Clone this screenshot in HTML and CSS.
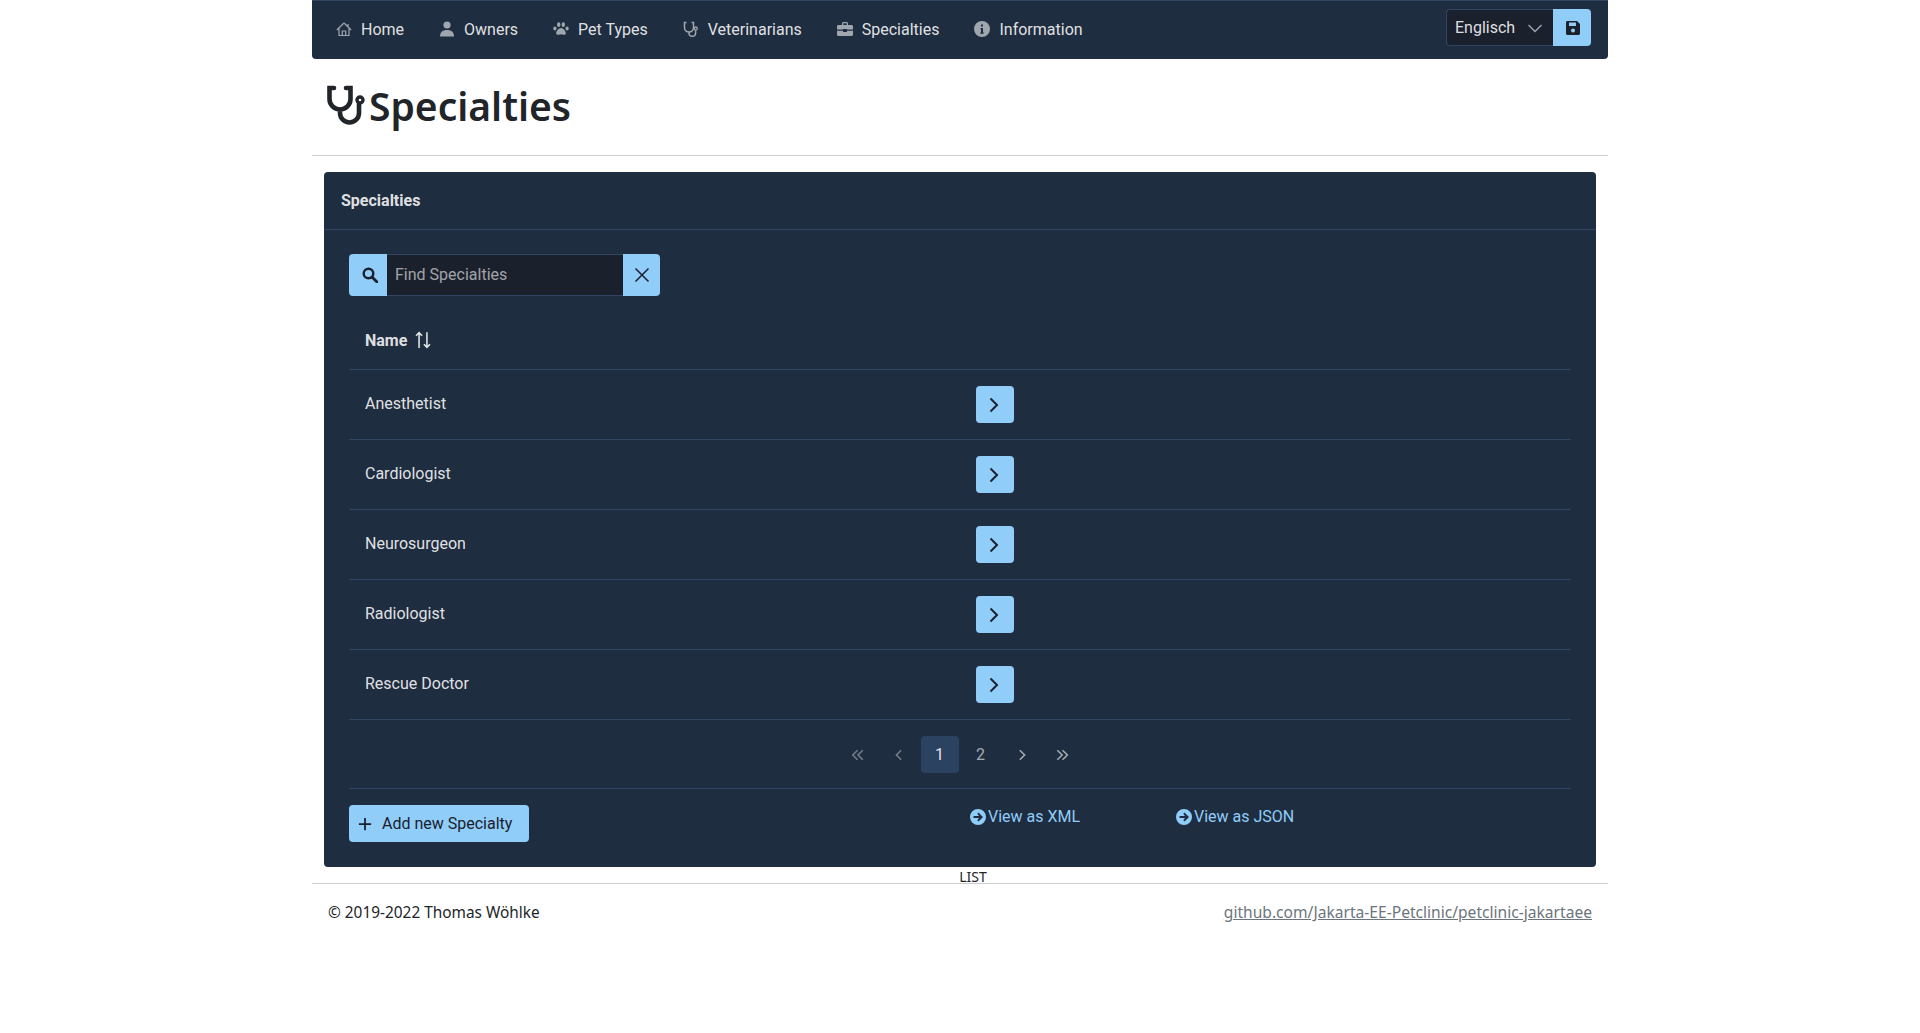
FILE: index.html
```html
<!DOCTYPE html>
<html lang="en">

<head>
    <meta charset="UTF-8">
    <meta name="viewport" content="width=device-width, initial-scale=1.0">
    <title>Specialties</title>
    <link rel="stylesheet" href="styles.css">
</head>

<body>
    <div class="container">
        <nav class="navbar">
            <ul class="nav-list">
                <li class="nav-item">
                    <svg class="nav-icon" viewBox="0 0 16 16"><path d="M8 2 .8 9M8 2l7.200 7M3 7v7.500h10V7M6.300 14.500V10h3.400v4.500M12 3v2.500" fill="none" stroke="currentColor" stroke-width="1.200"/></svg>
                    Home
                </li>
                <li class="nav-item">
                    <svg class="nav-icon" viewBox="0 0 16 16"><circle cx="8" cy="4" r="3.600" fill="currentColor"/><path d="M1 15.500c0-4.500 2.800-6.500 7-6.500s7 2 7 6.500z" fill="currentColor"/></svg>
                    Owners
                </li>
                <li class="nav-item">
                    <svg class="nav-icon" viewBox="0 0 16 16"><ellipse cx="5.700" cy="3.700" rx="1.700" ry="2.400" fill="currentColor"/><ellipse cx="10.300" cy="3.700" rx="1.700" ry="2.400" fill="currentColor"/><ellipse cx="1.900" cy="7.500" rx="1.600" ry="2.100" fill="currentColor"/><ellipse cx="14.100" cy="7.500" rx="1.600" ry="2.100" fill="currentColor"/><path d="M8 7c2 0 4.800 3 4.800 5.200 0 1.500-1.500 1.900-2.500 1.500-.9-.3-1.600-.5-2.300-.5s-1.400.2-2.300.5c-1 .4-2.500 0-2.500-1.500C3.200 10 6 7 8 7z" fill="currentColor"/></svg>
                    Pet Types
                </li>
                <li class="nav-item">
                    <svg class="nav-icon" viewBox="0 0 16 16"><path d="M3.500 1.500H1.500v5a4.500 4.500 0 0 0 9 0v-5h-2M6 11v1a3.300 3.300 0 0 0 6.600 0V9.500" fill="none" stroke="currentColor" stroke-width="1.500"/><circle cx="12.800" cy="7.500" r="1.500" fill="none" stroke="currentColor" stroke-width="1.300"/></svg>
                    Veterinarians
                </li>
                <li class="nav-item">
                    <svg class="nav-icon" viewBox="0 0 16 16"><path d="M5 4V2.500C5 1.700 5.700 1 6.500 1h3c.8 0 1.500.7 1.500 1.500V4h3.500c.8 0 1.500.7 1.500 1.500V8.500H10V8H6v.5H0V5.500C0 4.700.7 4 1.500 4zM6.300 4h3.400V2.300H6.300zM0 9.700h6V11h4V9.700h6v3.800c0 .8-.7 1.500-1.500 1.500h-13C.7 15 0 14.300 0 13.500z" fill="currentColor"/></svg>
                    Specialties
                </li>
                <li class="nav-item">
                    <svg class="nav-icon" viewBox="0 0 16 16"><path fill-rule="evenodd" d="M8 0a8 8 0 1 1 0 16A8 8 0 0 1 8 0zM7 3.500v2h2v-2zM6.500 7v1.200H7v3.300h-.7v1.200h3.400v-1.200H9V7z" fill="currentColor"/></svg>
                    Information
                </li>
            </ul>
            <div class="lang-form">
                <div class="lang-select">
                    Englisch
                    <svg class="lang-caret" viewBox="0 0 16 16"><path d="M1.500 5 8 11.500 14.500 5" fill="none" stroke="currentColor" stroke-width="1.400"/></svg>
                </div>
                <button class="btn btn-save">
                    <svg class="icon-sm" viewBox="0 0 16 16"><path fill-rule="evenodd" d="M2 1h10l3 3v9.500c0 .8-.7 1.500-1.500 1.500h-11C1.700 15 1 14.300 1 13.500v-11C1 1.700 1.700 1 2 1zM4 2.500V6h7V2.500zM8 8.500a2 2 0 1 0 0 4 2 2 0 0 0 0-4z" fill="currentColor"/></svg>
                </button>
            </div>
        </nav>

        <header class="page-title">
            <svg class="title-icon" viewBox="0 0 43 42"><path d="M8 3H3.500v11a10.500 10.500 0 0 0 21 0V3H20M14 25v3a9.500 9.500 0 0 0 19 0v-9" fill="none" stroke="currentColor" stroke-width="4.600" stroke-linecap="round"/><circle cx="34" cy="15" r="3" fill="none" stroke="currentColor" stroke-width="3.400"/></svg>
            <h1>Specialties</h1>
        </header>

        <hr class="rule">

        <section class="card">
            <div class="card-header">Specialties</div>
            <div class="card-body">
                <div class="search-group">
                    <span class="search-addon">
                        <svg class="icon-sm" viewBox="0 0 16 16"><circle cx="6.500" cy="6.500" r="4.800" fill="none" stroke="currentColor" stroke-width="2.400"/><path d="M10 10l5 5" stroke="currentColor" stroke-width="2.800" stroke-linecap="round"/></svg>
                    </span>
                    <div class="search-input">Find Specialties</div>
                    <button class="btn search-clear">
                        <svg class="icon-sm" viewBox="0 0 16 16"><path d="M1.500 1.500l13 13M14.500 1.500l-13 13" stroke="currentColor" stroke-width="1.500"/></svg>
                    </button>
                </div>

                <div class="row row-head">
                    <div class="col-name">
                        Name
                        <svg class="sort-icon" viewBox="0 0 16 16"><path d="M4.500 15V1.500M1.800 4.200 4.500 1.500l2.700 2.700M11.500 1v13.500M8.800 11.800l2.700 2.700 2.700-2.700" fill="none" stroke="currentColor" stroke-width="1.400"/></svg>
                    </div>
                </div>
                <div class="row">
                    <div class="col-name">Anesthetist</div>
                    <button class="btn btn-go"><svg class="icon-sm" viewBox="0 0 16 16"><path d="M3.500 1.500 10 8l-6.500 6.500" fill="none" stroke="currentColor" stroke-width="2"/></svg></button>
                </div>
                <div class="row">
                    <div class="col-name">Cardiologist</div>
                    <button class="btn btn-go"><svg class="icon-sm" viewBox="0 0 16 16"><path d="M3.500 1.500 10 8l-6.500 6.500" fill="none" stroke="currentColor" stroke-width="2"/></svg></button>
                </div>
                <div class="row">
                    <div class="col-name">Neurosurgeon</div>
                    <button class="btn btn-go"><svg class="icon-sm" viewBox="0 0 16 16"><path d="M3.500 1.500 10 8l-6.500 6.500" fill="none" stroke="currentColor" stroke-width="2"/></svg></button>
                </div>
                <div class="row">
                    <div class="col-name">Radiologist</div>
                    <button class="btn btn-go"><svg class="icon-sm" viewBox="0 0 16 16"><path d="M3.500 1.500 10 8l-6.500 6.500" fill="none" stroke="currentColor" stroke-width="2"/></svg></button>
                </div>
                <div class="row">
                    <div class="col-name">Rescue Doctor</div>
                    <button class="btn btn-go"><svg class="icon-sm" viewBox="0 0 16 16"><path d="M3.500 1.500 10 8l-6.500 6.500" fill="none" stroke="currentColor" stroke-width="2"/></svg></button>
                </div>

                <div class="pager">
                    <span class="page-link muted"><svg class="page-icon" viewBox="0 0 16 16"><path d="M7.500 2.500 2 8l5.500 5.500M13.500 2.500 8 8l5.500 5.500" fill="none" stroke="currentColor" stroke-width="1.800"/></svg></span>
                    <span class="page-link muted"><svg class="page-icon" viewBox="0 0 16 16"><path d="M10.500 2.500 5 8l5.500 5.500" fill="none" stroke="currentColor" stroke-width="1.800"/></svg></span>
                    <span class="page-link active">1</span>
                    <span class="page-link">2</span>
                    <span class="page-link"><svg class="page-icon" viewBox="0 0 16 16"><path d="M5.500 2.500 11 8l-5.500 5.500" fill="none" stroke="currentColor" stroke-width="1.800"/></svg></span>
                    <span class="page-link"><svg class="page-icon" viewBox="0 0 16 16"><path d="M1.500 2.500 7 8l-5.500 5.500M7.500 2.500 13 8l-5.500 5.500" fill="none" stroke="currentColor" stroke-width="1.800"/></svg></span>
                </div>

                <div class="actions">
                    <button class="btn btn-add">
                        <svg class="icon-plus" viewBox="0 0 16 16"><path d="M8 1v14M1 8h14" stroke="currentColor" stroke-width="2"/></svg>
                        Add new Specialty
                    </button>
                    <a class="view-link view-xml" href="#">
                        <svg class="view-icon" viewBox="0 0 16 16"><path fill-rule="evenodd" d="M8 0a8 8 0 1 1 0 16A8 8 0 0 1 8 0zM8.500 3.500 7.300 4.700 9 6.900H3.500v2.200H9l-1.700 2.200 1.200 1.200L13 8z" fill="currentColor"/></svg>View as XML
                    </a>
                    <a class="view-link view-json" href="#">
                        <svg class="view-icon" viewBox="0 0 16 16"><path fill-rule="evenodd" d="M8 0a8 8 0 1 1 0 16A8 8 0 0 1 8 0zM8.500 3.500 7.300 4.700 9 6.900H3.500v2.200H9l-1.700 2.200 1.200 1.200L13 8z" fill="currentColor"/></svg>View as JSON
                    </a>
                </div>
            </div>
        </section>

        <div class="view-name">LIST</div>
        <hr class="rule">

        <footer class="footer">
            <span class="copyright">© 2019-2022 Thomas Wöhlke</span>
            <a href="#">github.com/Jakarta-EE-Petclinic/petclinic-jakartaee</a>
        </footer>
    </div>
</body>

</html>
```

FILE: styles.css
```css
body {
    font-family: Roboto, sans-serif;
    font-size: 16px;
    margin: 0;
    background-color: #ffffff;
    color: #212529;
}

.container {
    width: 1296px;
    margin: 0 auto;
}

.btn {
    display: flex;
    align-items: center;
    justify-content: center;
    border: none;
    padding: 0;
    background-color: #90cdf9;
    color: #1a202c;
    font-family: Roboto, sans-serif;
    border-radius: 4px;
}

.icon-sm {
    width: 16px;
    height: 16px;
}

.navbar {
    display: flex;
    align-items: center;
    justify-content: space-between;
    height: 59px;
    padding: 0 17px 2px 24px;
    box-sizing: border-box;
    background-color: #1f2d40;
    border-top: 1px solid #304562;
    border-radius: 0 0 4px 4px;
}

.nav-list {
    display: flex;
    gap: 35px;
    margin: 0;
    padding: 0;
    list-style: none;
}

.nav-item {
    display: flex;
    align-items: center;
    gap: 9px;
    color: rgba(255, 255, 255, 0.87);
}

.nav-icon {
    width: 16px;
    height: 16px;
    color: #a0a6ae;
}

.lang-form {
    display: flex;
    height: 37px;
    margin-top: -3px;
}

.lang-select {
    display: flex;
    align-items: center;
    justify-content: space-between;
    width: 107px;
    padding: 0 10px 0 8px;
    box-sizing: border-box;
    background-color: #1a202c;
    border: 1px solid #304562;
    border-right: none;
    border-radius: 4px 0 0 4px;
    color: rgba(255, 255, 255, 0.87);
}

.lang-caret {
    width: 16px;
    height: 16px;
    color: #a0a6ae;
}

.btn-save {
    width: 38px;
    padding-left: 2px;
    border-radius: 0 4px 4px 0;
}

.page-title {
    display: flex;
    align-items: flex-start;
    height: 96px;
    padding: 26px 0 0 14px;
    box-sizing: border-box;
}

.title-icon {
    width: 43px;
    height: 42px;
    flex-shrink: 0;
}

.page-title h1 {
    margin: -3px 0 0;
    font-family: "Noto Sans", sans-serif;
    font-size: 39px;
    font-weight: 600;
    line-height: 48px;
}

.rule {
    margin: 0;
    border: none;
    border-top: 1px solid #cccccc;
}

.card {
    margin: 16px 12px 0;
    background-color: #1f2d40;
    border-radius: 4px;
    color: rgba(255, 255, 255, 0.87);
}

.card-header {
    height: 57px;
    padding-left: 17px;
    line-height: 57px;
    font-weight: 700;
    border-bottom: 1px solid #304562;
}

.card-body {
    padding: 24px 25px 25px;
}

.search-group {
    display: flex;
    width: 311px;
    height: 42px;
    margin-bottom: 6px;
}

.search-addon {
    display: flex;
    align-items: center;
    justify-content: center;
    width: 38px;
    padding-left: 3px;
    box-sizing: border-box;
    background-color: #90cdf9;
    color: #1a202c;
    border-radius: 4px 0 0 4px;
}

.search-input {
    flex: 1;
    padding-left: 8px;
    line-height: 40px;
    background-color: #1a202c;
    border-top: 1px solid #304562;
    border-bottom: 1px solid #304562;
    color: rgba(255, 255, 255, 0.6);
}

.search-clear {
    width: 37px;
    border-radius: 0 4px 4px 0;
}

.row {
    display: flex;
    align-items: center;
    height: 69px;
    border-bottom: 1px solid #304562;
}

.row-head {
    height: 67px;
    font-weight: 700;
}

.col-name {
    display: flex;
    align-items: center;
    gap: 7px;
    width: 611px;
    padding-left: 16px;
    margin-top: -2px;
}

.row-head .col-name {
    margin-top: 9px;
}

.sort-icon {
    width: 18px;
    height: 18px;
}

.btn-go {
    width: 38px;
    height: 37px;
}

.pager {
    display: flex;
    justify-content: center;
    gap: 3px;
    height: 69px;
    padding: 16px 0 0;
    box-sizing: border-box;
    border-bottom: 1px solid #304562;
}

.page-link {
    display: flex;
    align-items: center;
    justify-content: center;
    width: 38px;
    height: 37px;
    border-radius: 4px;
    color: rgba(255, 255, 255, 0.6);
}

.page-link.active {
    background-color: #2b4360;
    color: rgba(255, 255, 255, 0.87);
}

.page-link.muted {
    color: rgba(255, 255, 255, 0.38);
}

.page-icon {
    width: 14px;
    height: 14px;
}

.actions {
    position: relative;
    padding-top: 16px;
}

.btn-add {
    gap: 10px;
    width: 180px;
    height: 37px;
    font-size: 16px;
    justify-content: flex-start;
    padding-left: 9px;
}

.icon-plus {
    width: 14px;
    height: 14px;
}

/* the two links sit in columns of a wider grid on the real page */
.view-link {
    position: absolute;
    top: 18px;
    display: flex;
    align-items: center;
    gap: 2px;
    color: #90cdf9;
    text-decoration: none;
}

.view-xml {
    left: 621px;
}

.view-json {
    left: 827px;
}

.view-icon {
    width: 16px;
    height: 16px;
}

.view-name {
    height: 16px;
    padding-left: 26px;
    text-align: center;
    font-family: "Noto Sans", sans-serif;
    font-size: 14px;
    line-height: 20px;
    color: #212529;
}

.footer {
    display: flex;
    align-items: baseline;
    justify-content: space-between;
    padding: 16px 16px 0;
    font-family: "Noto Sans", sans-serif;
    font-size: 15.600px;
    line-height: 24px;
}

.copyright {
    font-size: 15.400px;
}

.footer a {
    color: #6c757d;
}
```
